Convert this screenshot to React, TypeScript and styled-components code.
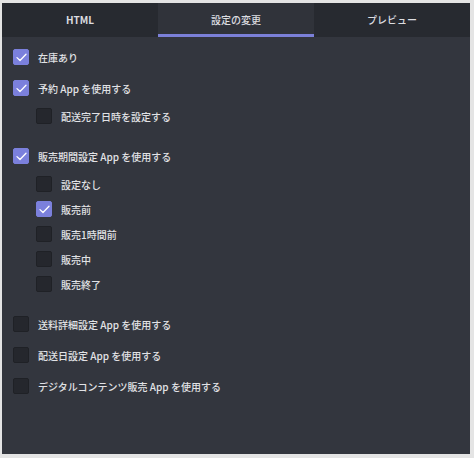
import React, { useState } from 'react';
import styled, { createGlobalStyle } from 'styled-components';

const GlobalStyle = createGlobalStyle`
  html, body {
    margin: 0;
    padding: 0;
    background: #e4e4e4;
  }
  body {
    font-family: "Noto Sans CJK JP", "Noto Sans", "Liberation Sans", sans-serif;
  }
`;

const Frame = styled.div`
  width: 474px;
  height: 458px;
  box-sizing: border-box;
  padding: 3px 4px 4px 2px;
`;

const Panel = styled.div`
  height: 100%;
  display: flex;
  flex-direction: column;
  background: #33363e;
`;

const TabBar = styled.div`
  display: grid;
  grid-template-columns: repeat(3, 1fr);
  height: 34px;
  background: #272a30;
`;

const Tab = styled.button<{ $active?: boolean; $latin?: boolean }>`
  border: none;
  margin: 0;
  padding: 1px 0 0;
  background: ${p => (p.$active ? '#30333a' : 'transparent')};
  border-bottom: 3px solid ${p => (p.$active ? '#7b80d8' : 'transparent')};
  color: #dcdde0;
  font-family: inherit;
  font-size: 10px;
  font-weight: ${p => (p.$latin ? 700 : 500)};
  cursor: pointer;
  display: flex;
  align-items: center;
  justify-content: center;
`;

const Content = styled.div`
  flex: 1;
  padding: 8px 11px;
  display: flex;
  flex-direction: column;
  gap: 7px;
`;

const Group = styled.div<{ $hasChildren?: boolean }>`
  display: flex;
  flex-direction: column;
  padding-bottom: ${p => (p.$hasChildren ? '9px' : '0')};
`;

const Children = styled.div`
  display: flex;
  flex-direction: column;
  gap: 1px;
  margin-top: 4px;
  padding-left: 23px;
`;

const Row = styled.label`
  display: flex;
  align-items: center;
  gap: 9px;
  height: 24px;
  cursor: pointer;
`;

const Box = styled.span<{ $checked?: boolean }>`
  width: 16px;
  height: 16px;
  box-sizing: border-box;
  border-radius: 2px;
  flex-shrink: 0;
  display: flex;
  align-items: center;
  justify-content: center;
  background: ${p => (p.$checked ? '#7b80dc' : '#25272d')};
  border: 1px solid ${p => (p.$checked ? '#7b80dc' : '#1f2126')};
`;

const Label = styled.span`
  color: #e1e2e5;
  font-size: 10px;
  font-weight: 500;
`;

type Item = { id: string; label: string; checked: boolean; children?: Item[] };

const initial: Item[] = [
  { id: 'stock', label: '在庫あり', checked: true },
  {
    id: 'reserve',
    label: '予約 App を使用する',
    checked: true,
    children: [{ id: 'delivery', label: '配送完了日時を設定する', checked: false }],
  },
  {
    id: 'period',
    label: '販売期間設定 App を使用する',
    checked: true,
    children: [
      { id: 'none', label: '設定なし', checked: false },
      { id: 'before', label: '販売前', checked: true },
      { id: 'hour', label: '販売1時間前', checked: false },
      { id: 'during', label: '販売中', checked: false },
      { id: 'end', label: '販売終了', checked: false },
    ],
  },
  { id: 'shipping', label: '送料詳細設定 App を使用する', checked: false },
  { id: 'date', label: '配送日設定 App を使用する', checked: false },
  { id: 'digital', label: 'デジタルコンテンツ販売 App を使用する', checked: false },
];

const Check = () => (
  <svg width="11" height="9" viewBox="0 0 11 9" fill="none">
    <path d="M1 4.6 L4 7.5 L10 1.2" stroke="#ffffff" strokeWidth="1.3" strokeLinecap="round" strokeLinejoin="round" />
  </svg>
);

const CheckRow: React.FC<{ item: Item; onToggle: (id: string) => void }> = ({ item, onToggle }) => (
  <Row onClick={() => onToggle(item.id)}>
    <Box $checked={item.checked}>{item.checked && <Check />}</Box>
    <Label>{item.label}</Label>
  </Row>
);

const toggle = (items: Item[], id: string): Item[] =>
  items.map(it =>
    it.id === id
      ? { ...it, checked: !it.checked }
      : it.children
      ? { ...it, children: toggle(it.children, id) }
      : it
  );

export default function App() {
  const [tab, setTab] = useState(1);
  const [items, setItems] = useState(initial);
  const onToggle = (id: string) => setItems(prev => toggle(prev, id));

  return (
    <>
      <GlobalStyle />
      <Frame>
        <Panel>
          <TabBar>
            {['HTML', '設定の変更', 'プレビュー'].map((t, i) => (
              <Tab key={t} $active={tab === i} $latin={i === 0} onClick={() => setTab(i)}>
                {t}
              </Tab>
            ))}
          </TabBar>
          <Content>
            {items.map(item => (
              <Group key={item.id} $hasChildren={!!item.children}>
                <CheckRow item={item} onToggle={onToggle} />
                {item.children && (
                  <Children>
                    {item.children.map(c => (
                      <CheckRow key={c.id} item={c} onToggle={onToggle} />
                    ))}
                  </Children>
                )}
              </Group>
            ))}
          </Content>
        </Panel>
      </Frame>
    </>
  );
}
